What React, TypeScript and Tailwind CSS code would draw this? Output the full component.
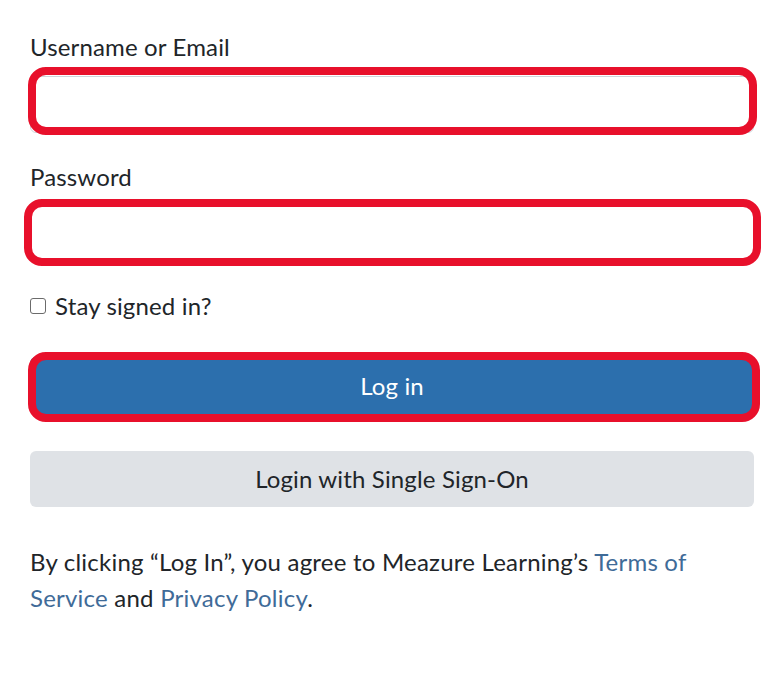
import React from 'react'

const RED = 'border-[#e8102b]'

export default function App() {
  return (
    <div
      className="w-[784px] h-[678px] bg-white px-[30px] pt-[29px] text-[#212529] text-[24px] leading-[36px] tracking-[0.15px]"
      style={{ fontFamily: 'Lato, "Noto Sans", sans-serif' }}
    >
      {/* username */}
      <div className="mb-[26px]">
        <label className="block mb-[11px]">Username or Email</label>
        <div className="relative">
          <input
            type="text"
            className="block w-[724px] h-[57px] rounded-[6px] border-[1.5px] border-[#ced4da] bg-white px-[18px] outline-none"
          />
          <span className={`pointer-events-none absolute -left-[2px] -right-[3px] -top-[9px] -bottom-[2px] rounded-[18px] border-[8px] ${RED}`} />
        </div>
      </div>

      {/* password */}
      <div className="mb-[25px]">
        <label className="block mb-[11px]">Password</label>
        <div className="relative">
          <input
            type="password"
            className="block w-[724px] h-[57px] rounded-[6px] border-[1.5px] border-[#ced4da] bg-white px-[18px] outline-none"
          />
          <span className={`pointer-events-none absolute -left-[6px] -right-[7px] -top-[7px] -bottom-[3px] rounded-[18px] border-[8px] ${RED}`} />
        </div>
      </div>

      {/* remember */}
      <div className="flex items-center gap-[9px] mb-[33px]">
        <span className="block w-[16px] h-[16px] rounded-[3px] border-[1.5px] border-[#6b6b6b] bg-white" />
        <span>Stay signed in?</span>
      </div>

      {/* log in */}
      <div className="relative mb-[37px]">
        <button className="block w-[724px] h-[57px] rounded-[6px] bg-[#2c6fad] text-white">
          Log in
        </button>
        <span className={`pointer-events-none absolute -left-[2px] -right-[6px] -top-[5px] -bottom-[8px] rounded-[18px] border-[8px] ${RED}`} />
      </div>

      {/* sso */}
      <button className="block w-[724px] h-[56px] rounded-[6px] bg-[#dfe2e6] text-[#212529] mb-[37px]">
        Login with Single Sign-On
      </button>

      <p className="w-[724px] tracking-[0.22px]">
        By clicking “Log In”, you agree to Meazure Learning’s{' '}
        <a className="text-[#3f6b98]">Terms of Service</a> and{' '}
        <a className="text-[#3f6b98]">Privacy Policy</a>.
      </p>
    </div>
  )
}
